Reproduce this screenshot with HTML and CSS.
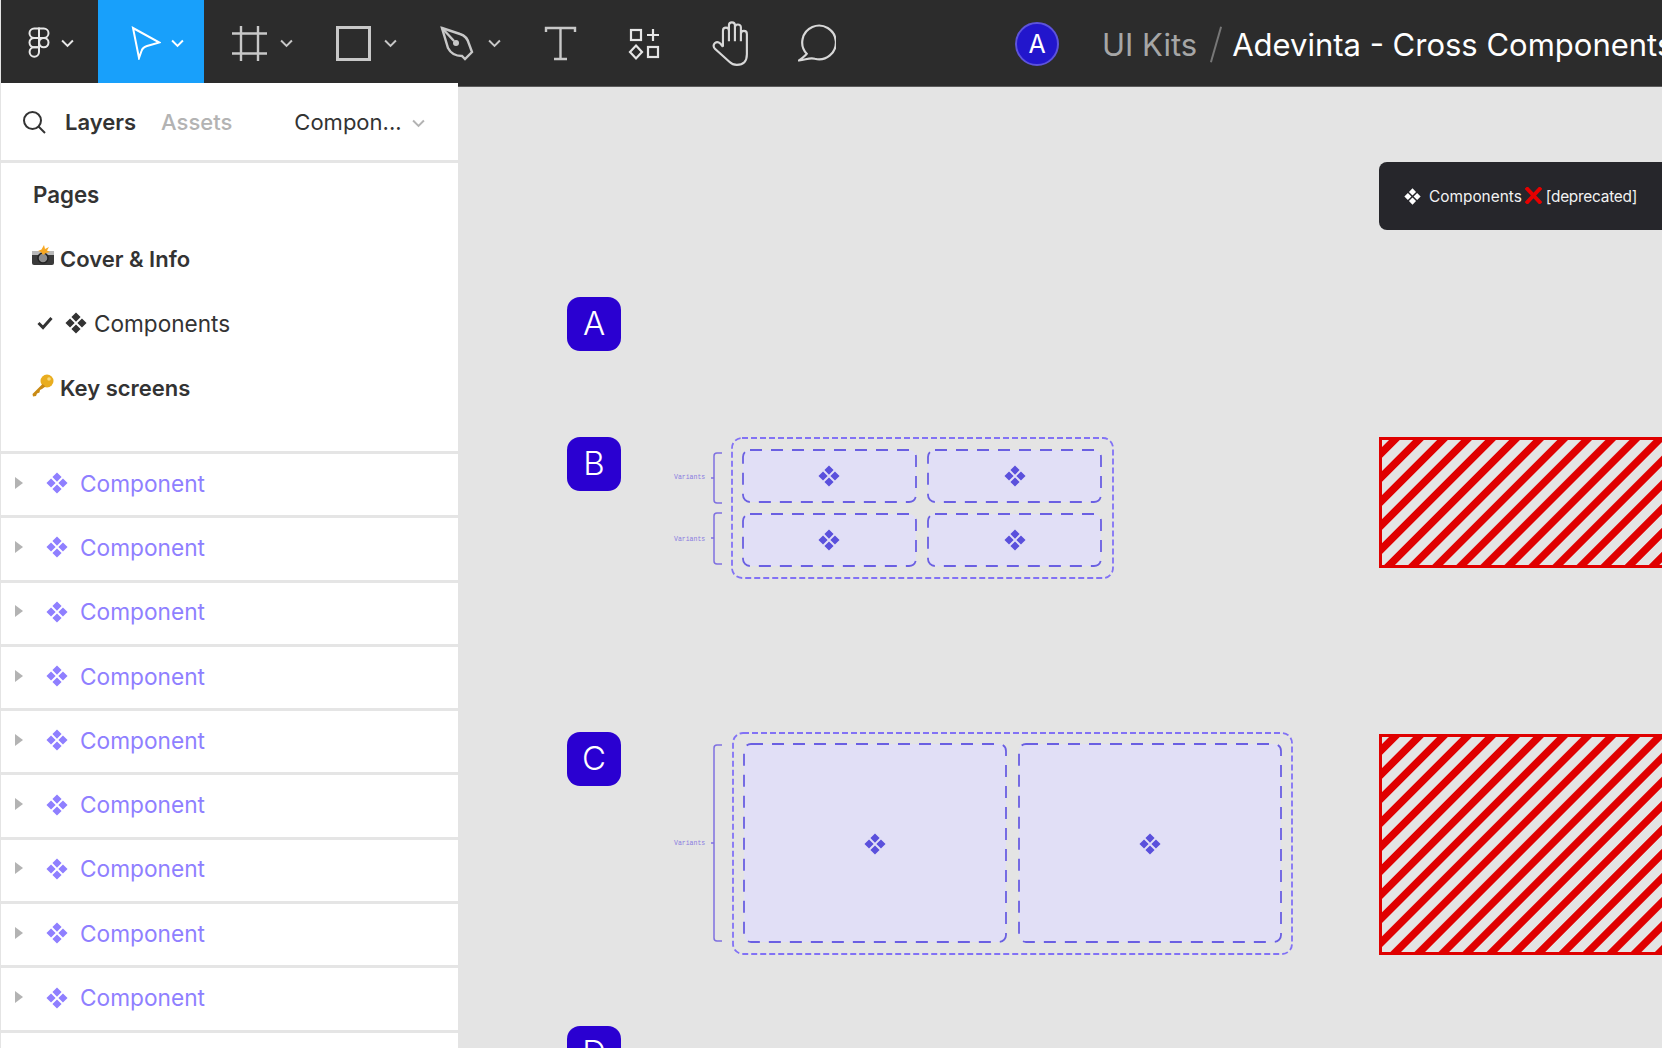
FILE: index.html
```html
<!DOCTYPE html>
<html lang="en">

<head>
    <meta charset="UTF-8">
    <meta name="viewport" content="width=device-width, initial-scale=1.0">
    <title>Adevinta - Cross Components</title>
    <link rel="stylesheet" href="styles.css">
</head>

<body>
    <svg class="defs" width="0" height="0">
        <symbol id="diamonds" viewBox="0 0 24 24">
            <path d="M12 .5 L17 5.500 L12 10.500 L7 5.500 Z M18.500 7 L23.500 12 L18.500 17 L13.500 12 Z M12 13.500 L17 18.500 L12 23.500 L7 18.500 Z M5.500 7 L10.500 12 L5.500 17 L.5 12 Z" />
        </symbol>
        <symbol id="chevron" viewBox="0 0 12 8">
            <path d="M1 1.200 L6 6.200 L11 1.200" fill="none" stroke="currentColor" stroke-width="1.800" />
        </symbol>
    </svg>

    <header class="topbar">
        <div class="tool tool-logo">
            <svg class="logo" viewBox="0 0 22 32" fill="none" stroke="#e8e8e8" stroke-width="2">
                <path d="M11 1.500 H6.200 a4.700 4.700 0 0 0 0 9.400 H11 Z" />
                <path d="M11 1.500 h4.800 a4.700 4.700 0 0 1 0 9.400 H11 Z" />
                <path d="M11 10.900 H6.200 a4.700 4.700 0 0 0 0 9.400 H11 Z" />
                <circle cx="15.800" cy="15.600" r="4.700" />
                <path d="M11 20.300 H6.200 a4.700 4.700 0 1 0 4.800 4.700 Z" />
            </svg>
            <svg class="chev chev-light"><use href="#chevron" /></svg>
        </div>
        <div class="tool tool-active">
            <svg class="icon" viewBox="0 0 30 34" fill="none" stroke="#fff" stroke-width="2">
                <path d="M2 2 L28.500 16.500 L16 20 Q11.500 21.500 10.500 25 L8 32 Z" />
            </svg>
            <svg class="chev chev-white"><use href="#chevron" /></svg>
        </div>
        <div class="tool tool-wide">
            <svg class="icon" viewBox="0 0 35 35" fill="none" stroke="#c8c8c8" stroke-width="2.400">
                <path d="M9 0 V35 M26 0 V35 M0 7.500 H35 M0 27.500 H35" />
            </svg>
            <svg class="chev"><use href="#chevron" /></svg>
        </div>
        <div class="tool tool-wide">
            <svg class="icon" viewBox="0 0 35 35" fill="none" stroke="#c8c8c8" stroke-width="3">
                <rect x="1.500" y="1.500" width="32" height="32" />
            </svg>
            <svg class="chev"><use href="#chevron" /></svg>
        </div>
        <div class="tool tool-wide">
            <svg class="icon" viewBox="0 0 35 35" fill="none" stroke="#c8c8c8" stroke-width="2.400">
                <path d="M2 2 L20 8 Q27 10 29 18 L32 26 L25 33 L22 30 Q12 30 8 22 Z" />
                <path d="M2 2 L14 15" />
                <circle cx="16" cy="17" r="3" fill="#c8c8c8" stroke="none" />
            </svg>
            <svg class="chev"><use href="#chevron" /></svg>
        </div>
        <div class="tool tool-plain">
            <svg class="icon" viewBox="0 0 35 35" fill="none" stroke="#c8c8c8" stroke-width="2.400">
                <path d="M3 6 V2 H32 V6 M17.500 2 V33 M11 33 H24" />
            </svg>
        </div>
        <div class="tool tool-plain">
            <svg class="icon" viewBox="0 0 35 35" fill="none" stroke="#e6e6e6" stroke-width="2.200">
                <rect x="4" y="4" width="10" height="10" />
                <rect x="21" y="21" width="10" height="10" />
                <path d="M9 19.500 L15 26 L9 32.500 L3 26 Z" />
                <path d="M26 3 V15 M20 9 H32" />
            </svg>
        </div>
        <div class="tool tool-hand">
            <svg class="icon icon-hand" viewBox="0 0 38 44" fill="none" stroke="#d8d8d8" stroke-width="2">
                <path d="M11 25 V10 a2.800 2.800 0 0 1 5.600 0 V20 M16.600 20 V5 a2.800 2.800 0 0 1 5.600 0 V20 M22.200 20 V7 a2.800 2.800 0 0 1 5.600 0 V20 M27.800 20 V13 a2.800 2.800 0 0 1 5.600 0 V32 Q33.400 42 24 42 Q20 42 17 39 L3.500 27 Q1 24 3.500 21.500 Q6 19.500 8.500 22 L11 25" />
            </svg>
        </div>
        <div class="tool tool-comment">
            <svg class="icon icon-comment" viewBox="0 0 35 35" fill="none" stroke="#d8d8d8" stroke-width="2">
                <path d="M8 27.500 A15.500 15.500 0 1 1 15.500 32 C11 30.500 7 33 1 33.500 Q6 30 8 27.500 Z" />
            </svg>
        </div>
        <div class="avatar">A</div>
        <div class="crumbs">
            <span class="crumb-folder">UI Kits</span>
            <span class="crumb-slash"></span>
            <span class="crumb-file">Adevinta - Cross Components</span>
        </div>
    </header>

    <div class="workspace">
        <aside class="sidebar">
            <div class="side-head">
                <svg class="search" viewBox="0 0 24 24" fill="none" stroke="#333" stroke-width="2">
                    <circle cx="10.500" cy="10.500" r="8.500" />
                    <path d="M16.500 16.500 L23 23" />
                </svg>
                <span class="tab tab-on">Layers</span>
                <span class="tab tab-off">Assets</span>
                <span class="page-pick">Compon...</span>
                <svg class="chev chev-pick"><use href="#chevron" /></svg>
            </div>
            <div class="pages">
                <div class="pages-title">Pages</div>
                <div class="page-row page-bold">
                    <svg class="emoji" viewBox="0 0 24 24">
                        <rect x="1" y="7" width="22" height="14" rx="2" fill="#3a3a3a" />
                        <rect x="1" y="7" width="22" height="4" fill="#b9b9b9" />
                        <circle cx="12" cy="14" r="5" fill="#8d8d8d" stroke="#222" stroke-width="1.500" />
                        <path d="M13 1 L14 5 L18 3 L16 6.500 L19 8 L15 9 L12 11 L10 8 L7 7 L10.500 5.500 Z" fill="#f7a823" />
                    </svg>
                    <span>Cover &amp; Info</span>
                </div>
                <div class="page-row page-current">
                    <svg class="check" viewBox="0 0 16 14" fill="none" stroke="#333" stroke-width="3">
                        <path d="M1.500 7 L6 11.500 L14.500 2" />
                    </svg>
                    <svg class="page-diamonds"><use href="#diamonds" /></svg>
                    <span>Components</span>
                </div>
                <div class="page-row page-bold">
                    <svg class="emoji" viewBox="0 0 24 24">
                        <circle cx="16" cy="8" r="6.500" fill="#e9ad1f" />
                        <path d="M11.500 11 L1.500 21 L2 23.500 L5 23 L6 20.500 L8.500 19.500 L9 17 L11 16 L14.500 13.500 Z" fill="#c98a14" />
                        <circle cx="18" cy="6" r="1.800" fill="#f8da7a" />
                    </svg>
                    <span>Key screens</span>
                </div>
            </div>
            <ul class="layers">
                <li class="layer"><i class="caret"></i><svg class="layer-icon"><use href="#diamonds" /></svg><span>Component</span></li>
                <li class="layer"><i class="caret"></i><svg class="layer-icon"><use href="#diamonds" /></svg><span>Component</span></li>
                <li class="layer"><i class="caret"></i><svg class="layer-icon"><use href="#diamonds" /></svg><span>Component</span></li>
                <li class="layer"><i class="caret"></i><svg class="layer-icon"><use href="#diamonds" /></svg><span>Component</span></li>
                <li class="layer"><i class="caret"></i><svg class="layer-icon"><use href="#diamonds" /></svg><span>Component</span></li>
                <li class="layer"><i class="caret"></i><svg class="layer-icon"><use href="#diamonds" /></svg><span>Component</span></li>
                <li class="layer"><i class="caret"></i><svg class="layer-icon"><use href="#diamonds" /></svg><span>Component</span></li>
                <li class="layer"><i class="caret"></i><svg class="layer-icon"><use href="#diamonds" /></svg><span>Component</span></li>
                <li class="layer"><i class="caret"></i><svg class="layer-icon"><use href="#diamonds" /></svg><span>Component</span></li>
            </ul>
        </aside>

        <main class="canvas">
            <div class="section-tag">
                <svg class="tag-diamonds"><use href="#diamonds" /></svg>
                <span>Components</span>
                <svg class="tag-cross" viewBox="0 0 16 16" fill="none" stroke="#e60000" stroke-width="3.600">
                    <path d="M1 .5 L15 15.500 M15 .5 L1 15.500" />
                </svg>
                <span class="tag-note">[deprecated]</span>
            </div>

            <div class="badge badge-a">A</div>
            <div class="badge badge-b">B</div>
            <div class="badge badge-c">C</div>
            <div class="badge badge-d">D</div>

            <!-- variant set B -->
            <div class="label label-b1">Variants</div>
            <div class="label label-b2">Variants</div>
            <svg class="set set-b" viewBox="0 0 410 150">
                <path class="bracket" d="M18 16 H13 Q10 16 10 19 V63 Q10 66 13 66 H18 M10 41 H7" />
                <path class="bracket" d="M18 76 H13 Q10 76 10 79 V124 Q10 127 13 127 H18 M10 101 H7" />
                <rect class="outer" x="28" y="1" width="381" height="140" rx="10" />
                <rect class="cell" x="39" y="13" width="173" height="52" rx="7" />
                <rect class="cell" x="224" y="13" width="173" height="52" rx="7" />
                <rect class="cell" x="39" y="77" width="173" height="52" rx="7" />
                <rect class="cell" x="224" y="77" width="173" height="52" rx="7" />
                <use class="mark" href="#diamonds" x="114" y="28" width="22" height="22" />
                <use class="mark" href="#diamonds" x="300" y="28" width="22" height="22" />
                <use class="mark" href="#diamonds" x="114" y="92" width="22" height="22" />
                <use class="mark" href="#diamonds" x="300" y="92" width="22" height="22" />
            </svg>

            <!-- variant set C -->
            <div class="label label-c">Variants</div>
            <svg class="set set-c" viewBox="0 0 590 230">
                <path class="bracket" d="M18 13 H13 Q10 13 10 16 V206 Q10 209 13 209 H18 M10 111 H7" />
                <rect class="outer" x="29" y="1" width="559" height="221" rx="10" />
                <rect class="cell" x="40" y="12" width="262" height="198" rx="7" />
                <rect class="cell" x="315" y="12" width="262" height="198" rx="7" />
                <use class="mark" href="#diamonds" x="160" y="101" width="22" height="22" />
                <use class="mark" href="#diamonds" x="435" y="101" width="22" height="22" />
            </svg>

            <div class="stripes stripes-b"></div>
            <div class="stripes stripes-c"></div>
        </main>
    </div>
</body>

</html>
```

FILE: styles.css
```css
* {
    box-sizing: border-box;
}

html,
body {
    margin: 0;
    height: 100%;
    overflow: hidden;
}

body {
    background-color: #e4e4e4;
    font-family: 'Inter', 'Liberation Sans', sans-serif;
    color: #333;
    padding-left: 1px;
}

.defs {
    position: absolute;
}

/* top bar */
.topbar {
    display: flex;
    align-items: flex-start;
    height: 87px;
    background-color: #2c2c2c;
    border-bottom: 1px solid #5c5c5c;
    white-space: nowrap;
    overflow: hidden;
}

.tool {
    display: flex;
    align-items: center;
    height: 83px;
    padding: 3px 0 0 27px;
    flex-shrink: 0;
}

.tool-logo {
    width: 97px;
    gap: 11px;
}

.tool-active {
    width: 106px;
    padding-left: 33px;
    gap: 10px;
    background-color: #18a0fb;
}

.tool-wide {
    width: 104px;
    gap: 13px;
    padding-left: 28px;
}

.tool-plain {
    width: 84px;
}

.tool-hand {
    width: 87px;
    padding-left: 27px;
}

.tool-comment {
    width: 86px;
}

.logo {
    width: 22px;
    height: 32px;
}

.icon {
    width: 35px;
    height: 35px;
}

.tool-active .icon {
    width: 30px;
    height: 34px;
}

.icon-hand {
    width: 41px;
    height: 47px;
}

.icon-comment {
    width: 38px;
    height: 38px;
}

.chev {
    width: 13px;
    height: 9px;
    color: #c8c8c8;
}

.chev-light {
    color: #e8e8e8;
}

.chev-white {
    color: #fff;
}

.avatar {
    width: 44px;
    height: 44px;
    margin: 22px 0 0 158px;
    border-radius: 50%;
    background-color: #2216cc;
    border: 2px solid #5d53dc;
    color: #fff;
    font-size: 25px;
    font-weight: 400;
    line-height: 40px;
    text-align: center;
    flex-shrink: 0;
}

.crumbs {
    display: flex;
    align-items: center;
    height: 88px;
    margin-left: 43px;
    font-size: 31px;
}

.crumb-folder {
    color: #a6a6a6;
}

.crumb-slash {
    width: 2px;
    height: 37px;
    margin: 0 15px 0 18px;
    background-color: #777;
    transform: rotate(16deg);
}

.crumb-file {
    color: #fff;
}

/* left panel */
.workspace {
    display: flex;
    height: 961px;
}

.sidebar {
    width: 457px;
    margin-top: -4px;
    height: 965px;
    background-color: #fff;
    position: relative;
    flex-shrink: 0;
}

.side-head {
    display: flex;
    align-items: center;
    height: 80px;
    padding-left: 21px;
    border-bottom: 3px solid #e5e5e5;
    font-size: 22px;
}

.search {
    width: 24px;
    height: 24px;
    flex-shrink: 0;
}

.tab {
    font-weight: 600;
}

.tab-on {
    margin-left: 19px;
}

.tab-off {
    margin-left: 25px;
    color: #b3b3b3;
    font-weight: 500;
}

.page-pick {
    margin-left: 62px;
}

.chev-pick {
    margin-left: 10px;
    color: #b3b3b3;
    margin-top: 3px;
}

.pages {
    height: 291px;
    padding-left: 32px;
    border-bottom: 3px solid #e5e5e5;
    font-size: 22.3px;
}

.pages-title {
    height: 64px;
    line-height: 64px;
    font-weight: 600;
}

.page-row {
    display: flex;
    align-items: center;
    height: 64.3px;
}

.page-bold {
    font-size: 22px;
    font-weight: 600;
}

.page-current {
    font-size: 22.6px;
}

.emoji {
    width: 24px;
    height: 24px;
    margin: -6px 5px 0 -2px;
    flex-shrink: 0;
}

.check {
    width: 16px;
    height: 14px;
    margin-left: 4px;
}

.page-diamonds {
    width: 22px;
    height: 22px;
    margin: 0 7px 0 12px;
    fill: #333;
}

.layers {
    list-style: none;
    margin: 0;
    padding: 0;
}

.layer {
    display: flex;
    align-items: center;
    height: 64.3px;
    padding: 0 0 3px 14px;
    border-bottom: 3px solid #e5e5e5;
    font-size: 22.7px;
    color: #8f7fff;
}

.caret {
    width: 0;
    height: 0;
    border-left: 8px solid #b3b3b3;
    border-top: 6px solid transparent;
    border-bottom: 6px solid transparent;
    margin-top: -1px;
}

.layer-icon {
    width: 22px;
    height: 22px;
    margin: 0 12px 0 23px;
    fill: #8f7fff;
}

/* canvas - everything here sits at its own spot on the artboard */
.canvas {
    position: relative;
    flex: 1;
    overflow: hidden;
}

.section-tag {
    position: absolute;
    left: 921px;
    top: 75px;
    width: 400px;
    height: 68px;
    display: flex;
    align-items: center;
    padding-left: 25px;
    border-radius: 8px;
    background-color: #26262b;
    color: #f2f2f2;
    font-size: 15.4px;
}

.tag-diamonds {
    width: 17px;
    height: 17px;
    margin-right: 8px;
    fill: #fff;
}

.tag-cross {
    width: 17px;
    height: 17px;
    margin: -2px 4px 0 3px;
}

.tag-note {
    letter-spacing: -0.25px;
}

.badge {
    position: absolute;
    left: 109px;
    width: 54px;
    height: 54px;
    border-radius: 13px;
    background-color: #2a00d1;
    color: #fff;
    font-size: 33px;
    font-weight: 300;
    line-height: 52px;
    text-align: center;
}

.badge-a {
    top: 210px;
}

.badge-b {
    top: 350px;
}

.badge-c {
    top: 645px;
}

.badge-d {
    top: 939px;
}

.set {
    position: absolute;
}

.set-b {
    left: 246px;
    top: 350px;
    width: 410px;
    height: 150px;
}

.set-c {
    left: 246px;
    top: 645px;
    width: 590px;
    height: 230px;
}

.bracket {
    fill: none;
    stroke: #7f70e0;
    stroke-width: 1.5;
}

.outer {
    fill: none;
    stroke: #8272f5;
    stroke-width: 1.8;
    stroke-dasharray: 6 3;
}

.cell {
    fill: #e1dff6;
    stroke: #6a5fe2;
    stroke-width: 1.8;
    stroke-dasharray: 12 9;
}

.mark {
    fill: #5a50dc;
}

.label {
    position: absolute;
    left: 216px;
    font-family: 'Liberation Mono', monospace;
    font-size: 6.5px;
    line-height: 8px;
    color: #8a7ce0;
}

.label-b1 {
    top: 387px;
}

.label-b2 {
    top: 449px;
}

.label-c {
    top: 753px;
}

.stripes {
    position: absolute;
    left: 921px;
    width: 400px;
    border: 3px solid #e00000;
    background: repeating-linear-gradient(135deg, #e4e4e4 0, #e4e4e4 4.5px, #e00000 5.5px, #e00000 12px, #e4e4e4 13px, #e4e4e4 17px);
}

.stripes-b {
    top: 350px;
    height: 131px;
}

.stripes-c {
    top: 647px;
    height: 221px;
}
```
